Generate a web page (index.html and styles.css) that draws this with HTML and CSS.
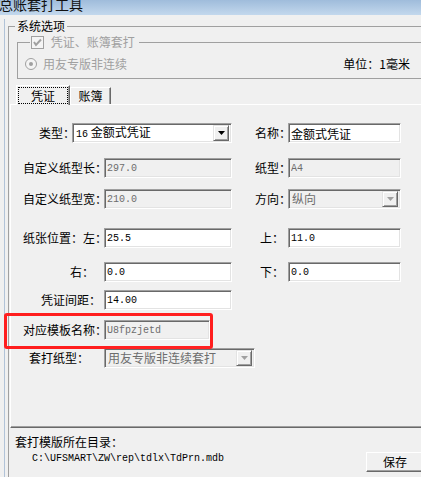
FILE: index.html
```html
<!DOCTYPE html>
<html lang="zh-CN">
<head>
    <meta charset="UTF-8">
    <meta name="viewport" content="width=device-width, initial-scale=1.0">
    <title>总账套打工具</title>
    <link rel="stylesheet" href="styles.css">
</head>
<body>
    <div class="titlebar"><span class="title">总账套打工具</span></div>

    <div class="frame">
        <fieldset class="group">
            <legend class="group-title">系统选项</legend>

            <fieldset class="subgroup">
                <legend class="check-title">
                    <svg class="check-box" width="13" height="13" viewBox="0 0 13 13">
                        <rect x="0.5" y="0.5" width="12" height="12" fill="#f4f4f4" stroke="#a0a0a0"/>
                        <polyline points="3,6 5,9 10,3.5" fill="none" stroke="#a0a0a0" stroke-width="2"/>
                    </svg>
                    <span>凭证、账簿套打</span>
                </legend>
                <div class="opt-row">
                    <span class="radio">
                        <svg width="12" height="12" viewBox="0 0 12 12">
                            <circle cx="6" cy="6" r="5.5" fill="#f4f4f4" stroke="#a0a0a0"/>
                            <circle cx="6" cy="6" r="2" fill="#a0a0a0"/>
                        </svg>
                        用友专版非连续
                    </span>
                    <span class="unit">单位：1毫米</span>
                </div>
            </fieldset>

            <div class="tabs">
                <div class="tab-strip">
                    <div class="tab active"><span class="focus">凭证</span></div>
                    <div class="tab">账簿</div>
                </div>
                <div class="tab-page">
                    <div class="row row-type">
                        <label class="lbl">类型：</label>
                        <div class="field combo">
                            <span class="combo-text"><span class="mono">16</span> 金额式凭证</span>
                            <span class="combo-btn"><svg width="7" height="4" viewBox="0 0 7 4"><polygon points="0,0 7,0 3.5,4" fill="#000"/></svg></span>
                        </div>
                        <label class="lbl">名称：</label>
                        <input class="field" type="text" value="金额式凭证">
                    </div>

                    <div class="row mt-15">
                        <label class="lbl">自定义纸型长：</label>
                        <input class="field mono" type="text" value="297.0" disabled>
                        <label class="lbl">纸型：</label>
                        <input class="field mono" type="text" value="A4" disabled>
                    </div>

                    <div class="row mt-11">
                        <label class="lbl">自定义纸型宽：</label>
                        <input class="field mono" type="text" value="210.0" disabled>
                        <label class="lbl">方向：</label>
                        <div class="field combo off">
                            <span class="combo-text">纵向</span>
                            <span class="combo-btn"><svg width="7" height="4" viewBox="0 0 7 4"><polygon points="0,0 7,0 3.5,4" fill="#a0a0a0"/></svg></span>
                        </div>
                    </div>

                    <div class="row mt-19">
                        <label class="lbl">纸张位置：左：</label>
                        <input class="field mono" type="text" value="25.5">
                        <label class="lbl lbl-r7">上：</label>
                        <input class="field mono" type="text" value="11.0">
                    </div>

                    <div class="row mt-14">
                        <label class="lbl lbl-r13">右：</label>
                        <input class="field mono" type="text" value="0.0">
                        <label class="lbl lbl-r7">下：</label>
                        <input class="field mono" type="text" value="0.0">
                    </div>

                    <div class="row mt-8">
                        <label class="lbl lbl-r6">凭证间距：</label>
                        <input class="field mono" type="text" value="14.00">
                    </div>

                    <div class="row mt-10 row-mark">
                        <label class="lbl">对应模板名称：</label>
                        <input class="field mono w-name" type="text" value="U8fpzjetd" disabled>
                    </div>

                    <div class="row mt-8">
                        <label class="lbl lbl-r18">套打纸型：</label>
                        <div class="field combo off w-paper">
                            <span class="combo-text">用友专版非连续套打</span>
                            <span class="combo-btn"><svg width="7" height="4" viewBox="0 0 7 4"><polygon points="0,0 7,0 3.5,4" fill="#a0a0a0"/></svg></span>
                        </div>
                    </div>
                </div>
            </div>

            <div class="footer">
                <div class="dir-label">套打模版所在目录：</div>
                <div class="dir-row">
                    <span class="path">C:\UFSMART\ZW\rep\tdlx\TdPrn.mdb</span>
                    <button class="btn">保存</button>
                </div>
            </div>
        </fieldset>
    </div>
</body>
</html>
```

FILE: styles.css
```css
body {
    margin: 0;
    width: 421px;
    height: 477px;
    overflow: hidden;
    background-color: #f0f0f0;
    font-family: "Noto Sans CJK SC", "Noto Sans", sans-serif;
    font-size: 12px;
    line-height: 14px;
    color: #000;
}

.titlebar {
    height: 15px;
    overflow: hidden;
    background: linear-gradient(#9fbcdb, #c3d8ed);
}

.title {
    display: block;
    margin: -3px 0 0 -1px;
    font-size: 14px;
    line-height: 14px;
    color: #111;
}

.frame {
    margin-left: 4px;
    border-left: 1px solid #b1c3d8;
    height: 462px;
}

/* group boxes */
.group {
    margin: 4px 0 0 3px;
    padding: 0;
    border: 1px solid #a0a0a0;
    width: 440px;
    height: 480px;
    box-sizing: border-box;
    min-width: 0;
}

.group-title {
    margin-left: 6px;
    padding: 0 2px;
    line-height: 14px;
}

.subgroup {
    margin: 2px 0 0 8px;
    padding: 8px 0 7px 7px;
    border: 1px solid #a0a0a0;
    min-width: 0;
}

.check-title {
    margin-left: 5px;
    padding: 0 4px 0 1px;
    line-height: 14px;
    color: #a0a0a0;
}

.check-box {
    vertical-align: -2px;
    margin-right: 4px;
}

.opt-row {
    display: flex;
    width: 385px;
}

.radio {
    display: flex;
    align-items: center;
    gap: 6px;
    color: #a0a0a0;
}

.unit {
    margin-left: auto;
}

/* tab control */
.tabs {
    margin: 6px 0 0 1px;
    width: 430px;
}

.tab-strip {
    display: flex;
    align-items: flex-end;
    padding-left: 6px;
}

.tab {
    width: 41px;
    height: 17px;
    box-sizing: border-box;
    border: 1px solid;
    border-color: #fff #696969 transparent #fff;
    border-bottom: 0;
    box-shadow: inset -1px 0 #a0a0a0;
    text-align: center;
    line-height: 16px;
}

.tab.active {
    width: 54px;
    height: 20px;
    margin-bottom: -1px;
    padding: 1px 0 0 1px;
    position: relative;
    z-index: 1;
    background-color: #f0f0f0;
}

.focus {
    display: block;
    width: 50px;
    height: 17px;
    box-sizing: border-box;
    border: 1px dotted #000;
    line-height: 15px;
}

.tab-page {
    height: 324px;
    box-sizing: border-box;
    padding-top: 18px;
    border-top: 1px solid #fff;
    border-left: 1px solid #fff;
    border-bottom: 1px solid #696969;
    box-shadow: inset 0 -1px #a0a0a0;
}

/* form rows */
.row {
    display: grid;
    grid-template-columns: 93px 128px 56px 113px;
    align-items: center;
    height: 20px;
}

.row-type {
    grid-template-columns: 61px 160px 56px 113px;
}

.mt-8 { margin-top: 8px; }
.mt-10 { margin-top: 10px; }
.mt-11 { margin-top: 11px; }
.mt-14 { margin-top: 14px; }
.mt-15 { margin-top: 15px; }
.mt-19 { margin-top: 19px; }

.lbl {
    text-align: right;
    white-space: nowrap;
    margin-right: -3px;
}

.lbl-r6 { padding-right: 6px; }
.lbl-r7 { padding-right: 7px; }
.lbl-r13 { padding-right: 13px; }
.lbl-r18 { padding-right: 18px; }

.field {
    box-sizing: border-box;
    width: 100%;
    height: 20px;
    margin: 0;
    padding: 0 2px;
    border: 1px solid;
    border-color: #a0a0a0 #fff #fff #a0a0a0;
    box-shadow: inset 1px 1px #696969, inset -1px -1px #e3e3e3;
    background-color: #fff;
    font-family: "Noto Sans CJK SC", sans-serif;
    font-size: 12px;
    line-height: 16px;
    color: #000;
    outline: none;
}

.mono,
.field.mono {
    font-family: "Liberation Mono", "DejaVu Sans Mono", monospace;
    font-size: 10px;
}

.field:disabled,
.field.off {
    background-color: #f0f0f0;
    color: #6d6d6d;
}

.w-name {
    width: 106px;
}

.w-paper {
    width: 151px;
}

.combo {
    display: flex;
    align-items: center;
    padding: 0 2px 0 3px;
}

.combo-text {
    flex: 1;
    white-space: nowrap;
    overflow: hidden;
}

.combo-btn {
    display: flex;
    align-items: center;
    justify-content: center;
    width: 16px;
    height: 16px;
    box-sizing: border-box;
    border: 1px solid;
    border-color: #e3e3e3 #696969 #696969 #e3e3e3;
    box-shadow: inset 1px 1px #fff, inset -1px -1px #a0a0a0;
    background-color: #f0f0f0;
}

/* highlight around the template name */
.row-mark {
    position: relative;
}

.row-mark::after {
    content: "";
    position: absolute;
    left: -7px;
    top: -7px;
    width: 209px;
    height: 36px;
    box-sizing: border-box;
    border: 3px solid #ff1e1e;
    border-radius: 3px;
    pointer-events: none;
}

/* footer */
.footer {
    width: 415px;
    box-sizing: border-box;
    padding: 7px 0 0 6px;
}

.dir-row {
    display: flex;
    justify-content: space-between;
    align-items: flex-start;
    margin-top: 3px;
    padding-left: 17px;
}

.path {
    font-family: "Liberation Mono", "DejaVu Sans Mono", monospace;
    font-size: 10px;
    line-height: 14px;
}

.btn {
    width: 58px;
    height: 20px;
    padding: 0;
    border: 1px solid;
    border-color: #fff #696969 #696969 #fff;
    box-shadow: inset -1px -1px #a0a0a0;
    background-color: #f0f0f0;
    font-family: "Noto Sans CJK SC", sans-serif;
    font-size: 12px;
    line-height: 16px;
    color: #000;
}
```
